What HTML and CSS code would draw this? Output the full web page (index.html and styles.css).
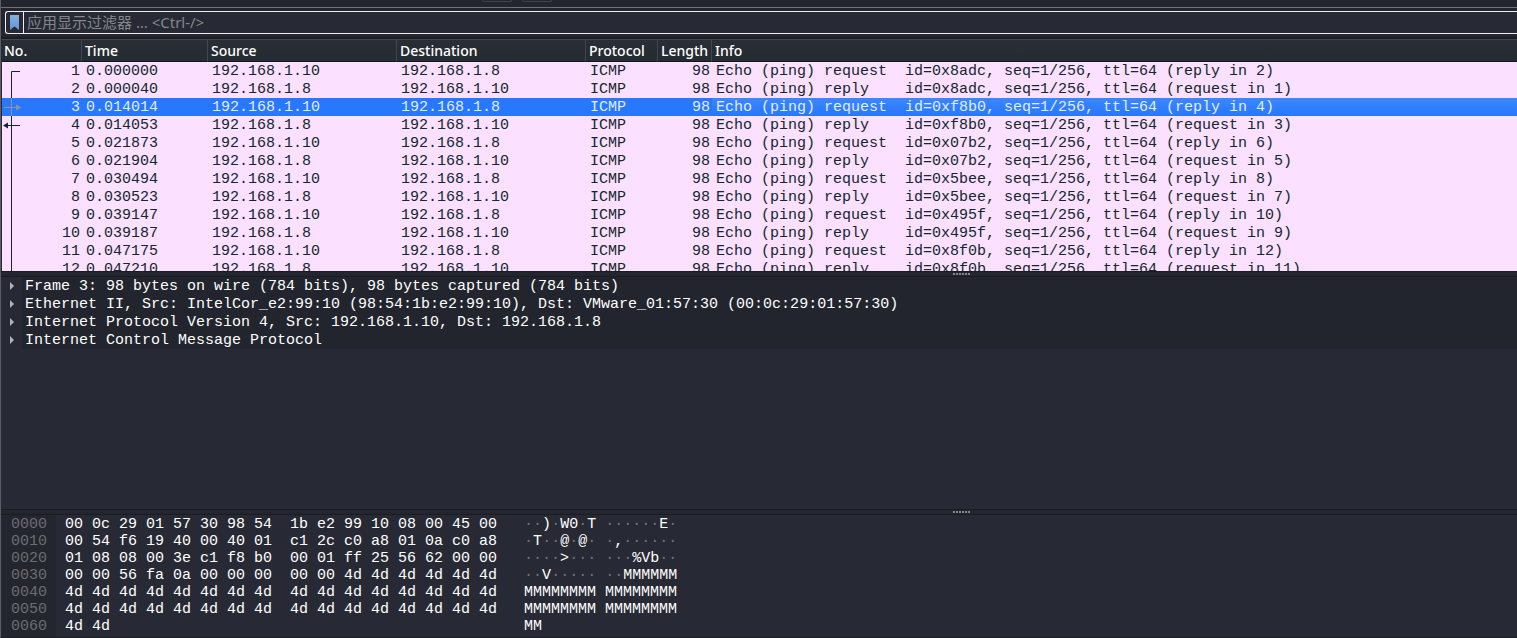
FILE: index.html
```html
<!DOCTYPE html>
<html lang="zh-CN">
<head>
<meta charset="utf-8">
<title>Packet capture</title>
<link rel="stylesheet" href="styles.css">
</head>
<body>
<main class="window">
  <div class="toolbar"><span class="tool-edge"></span><span class="tool-edge"></span></div>
  <form class="filter-bar">
    <div class="filter">
      <button class="bookmark" type="button" aria-label="书签">
        <svg width="9" height="15" viewBox="0 0 9 15"><defs><linearGradient id="bm" x1="0" y1="0" x2="0" y2="1"><stop offset="0" stop-color="#85b0e4"/><stop offset="1" stop-color="#6394d3"/></linearGradient></defs><path d="M0 0H9V15L4.500 11.500L0 15Z" fill="url(#bm)"/></svg>
      </button>
      <input class="filter-input" type="text" aria-label="显示过滤器" placeholder="应用显示过滤器 … &lt;Ctrl-/&gt;">
    </div>
  </form>
  <section class="packets">
    <table class="packet-table">
      <colgroup><col class="c-no"><col class="c-time"><col class="c-addr"><col class="c-addr"><col class="c-proto"><col class="c-len"><col></colgroup>
      <thead><tr><th>No.</th><th>Time</th><th>Source</th><th>Destination</th><th>Protocol</th><th>Length</th><th>Info</th></tr></thead>
      <tbody>
        <tr><td>1</td><td>0.000000</td><td>192.168.1.10</td><td>192.168.1.8</td><td>ICMP</td><td>98</td><td>Echo (ping) request  id=0x8adc, seq=1/256, ttl=64 (reply in 2)</td></tr>
        <tr><td>2</td><td>0.000040</td><td>192.168.1.8</td><td>192.168.1.10</td><td>ICMP</td><td>98</td><td>Echo (ping) reply    id=0x8adc, seq=1/256, ttl=64 (request in 1)</td></tr>
        <tr class="selected"><td>3</td><td>0.014014</td><td>192.168.1.10</td><td>192.168.1.8</td><td>ICMP</td><td>98</td><td>Echo (ping) request  id=0xf8b0, seq=1/256, ttl=64 (reply in 4)</td></tr>
        <tr><td>4</td><td>0.014053</td><td>192.168.1.8</td><td>192.168.1.10</td><td>ICMP</td><td>98</td><td>Echo (ping) reply    id=0xf8b0, seq=1/256, ttl=64 (request in 3)</td></tr>
        <tr><td>5</td><td>0.021873</td><td>192.168.1.10</td><td>192.168.1.8</td><td>ICMP</td><td>98</td><td>Echo (ping) request  id=0x07b2, seq=1/256, ttl=64 (reply in 6)</td></tr>
        <tr><td>6</td><td>0.021904</td><td>192.168.1.8</td><td>192.168.1.10</td><td>ICMP</td><td>98</td><td>Echo (ping) reply    id=0x07b2, seq=1/256, ttl=64 (request in 5)</td></tr>
        <tr><td>7</td><td>0.030494</td><td>192.168.1.10</td><td>192.168.1.8</td><td>ICMP</td><td>98</td><td>Echo (ping) request  id=0x5bee, seq=1/256, ttl=64 (reply in 8)</td></tr>
        <tr><td>8</td><td>0.030523</td><td>192.168.1.8</td><td>192.168.1.10</td><td>ICMP</td><td>98</td><td>Echo (ping) reply    id=0x5bee, seq=1/256, ttl=64 (request in 7)</td></tr>
        <tr><td>9</td><td>0.039147</td><td>192.168.1.10</td><td>192.168.1.8</td><td>ICMP</td><td>98</td><td>Echo (ping) request  id=0x495f, seq=1/256, ttl=64 (reply in 10)</td></tr>
        <tr><td>10</td><td>0.039187</td><td>192.168.1.8</td><td>192.168.1.10</td><td>ICMP</td><td>98</td><td>Echo (ping) reply    id=0x495f, seq=1/256, ttl=64 (request in 9)</td></tr>
        <tr><td>11</td><td>0.047175</td><td>192.168.1.10</td><td>192.168.1.8</td><td>ICMP</td><td>98</td><td>Echo (ping) request  id=0x8f0b, seq=1/256, ttl=64 (reply in 12)</td></tr>
        <tr><td>12</td><td>0.047210</td><td>192.168.1.8</td><td>192.168.1.10</td><td>ICMP</td><td>98</td><td>Echo (ping) reply    id=0x8f0b, seq=1/256, ttl=64 (request in 11)</td></tr>
      </tbody>
    </table>
    <svg class="relations" width="22" height="216" viewBox="0 0 22 216" aria-hidden="true">
      <path d="M18 9.500H9.500V36M9.500 54V216" fill="none" stroke="#12272e"/>
      <path d="M9.500 36V54M2 45.500H14" fill="none" stroke="#8c929e"/>
      <path d="M14 42.500L19.500 45.500L14 48.500Z" fill="#8c929e"/>
      <path d="M5 63.500H18" fill="none" stroke="#12272e"/>
      <path d="M1 63.500L6 60.500V66.500Z" fill="#12272e"/>
    </svg>
  </section>
  <div class="splitter"><span class="grip"><i></i><i></i><i></i><i></i><i></i><i></i></span></div>
  <section class="details">
    <ul class="tree">
      <li><button class="expander" aria-label="展开"></button><span class="node">Frame 3: 98 bytes on wire (784 bits), 98 bytes captured (784 bits)</span></li>
      <li><button class="expander" aria-label="展开"></button><span class="node">Ethernet II, Src: IntelCor_e2:99:10 (98:54:1b:e2:99:10), Dst: VMware_01:57:30 (00:0c:29:01:57:30)</span></li>
      <li><button class="expander" aria-label="展开"></button><span class="node">Internet Protocol Version 4, Src: 192.168.1.10, Dst: 192.168.1.8</span></li>
      <li><button class="expander" aria-label="展开"></button><span class="node">Internet Control Message Protocol</span></li>
    </ul>
  </section>
  <div class="splitter"><span class="grip"><i></i><i></i><i></i><i></i><i></i><i></i></span></div>
  <section class="bytes">
<pre class="offsets">0000
0010
0020
0030
0040
0050
0060</pre>
<pre class="hex">00 0c 29 01 57 30 98 54  1b e2 99 10 08 00 45 00
00 54 f6 19 40 00 40 01  c1 2c c0 a8 01 0a c0 a8
01 08 08 00 3e c1 f8 b0  00 01 ff 25 56 62 00 00
00 00 56 fa 0a 00 00 00  00 00 4d 4d 4d 4d 4d 4d
4d 4d 4d 4d 4d 4d 4d 4d  4d 4d 4d 4d 4d 4d 4d 4d
4d 4d 4d 4d 4d 4d 4d 4d  4d 4d 4d 4d 4d 4d 4d 4d
4d 4d</pre>
<pre class="ascii">··<b>)</b>·<b>W0</b>·<b>T</b> ······<b>E</b>·
·<b>T</b>··<b>@</b>·<b>@</b>· ·<b>,</b>······
····<b>&gt;</b>··· ···<b>%Vb</b>··
··<b>V</b>····· ··<b>MMMMMM</b>
<b>MMMMMMMM MMMMMMMM</b>
<b>MMMMMMMM MMMMMMMM</b>
<b>MM</b></pre>
  </section>
</main>
</body>
</html>
```
FILE: styles.css
```css
* { box-sizing: border-box; }

body {
  margin: 0;
  background: #272a34;
  color: #ffffff;
  font-family: "Liberation Mono", "Noto Sans CJK SC", monospace;
  font-size: 15px;
}

.window {
  display: flex;
  flex-direction: column;
  height: 100vh;
  overflow: hidden;
  border-left: 1px solid #5d5d61;
  border-bottom: 1px solid #1c1e25;
}

.toolbar {
  display: flex;
  flex: none;
  gap: 10px;
  height: 8px;
  padding-left: 481px;
  background: #23262e;
  border-bottom: 1px solid #707176;
}

.tool-edge {
  width: 30px;
  height: 2px;
  border: 1px solid #41444d;
  border-top: 0;
  border-radius: 0 0 3px 3px;
}

.filter-bar {
  flex: none;
  margin: 0;
  padding: 3px 0 3px 4px;
  background: #23262e;
  border-bottom: 2px solid #1b1d23;
}

.filter {
  display: flex;
  height: 23px;
  border: 1px solid #eeeeee;
  border-right: 0;
  border-radius: 3px 0 0 3px;
  background: #272a34;
}

.bookmark {
  display: flex;
  align-items: center;
  justify-content: center;
  width: 18px;
  padding: 0;
  border: 0;
  border-right: 1px solid #eeeeee;
  background: none;
}

.filter-input {
  flex: 1;
  min-width: 0;
  padding: 0 3px 2px;
  border: 0;
  outline: 0;
  background: none;
  color: #ffffff;
  font: 15px "Noto Sans", "Noto Sans CJK SC", sans-serif;
}

.filter-input::placeholder { color: #85868b; opacity: 1; }

.packets {
  position: relative;
  flex: 232 1 0;
  min-height: 0;
  margin-left: 1px;
  overflow: hidden;
}

.packet-table {
  width: 100%;
  table-layout: fixed;
  border-collapse: separate;
  border-spacing: 0;
}

.c-no { width: 80px; }
.c-time { width: 126px; }
.c-addr { width: 189px; }
.c-proto { width: 72px; }
.c-len { width: 54px; }

th {
  height: 23px;
  padding: 0 0 0 3px;
  border-top: 1px solid #43464d;
  border-right: 1px solid #43464d;
  border-bottom: 1px solid #15171b;
  background: linear-gradient(#2a2e36, #242b31);
  font: 500 14px/21px "Noto Sans", sans-serif;
  text-align: left;
  white-space: nowrap;
}

th:first-child { padding-left: 2px; }
th:last-child { border-right: 0; }

td {
  height: 18px;
  padding: 2px 2px 0 4px;
  overflow: hidden;
  background: #fbe0ff;
  color: #12272e;
  line-height: 16px;
  white-space: pre;
}

td:first-child,
td:nth-child(6) { text-align: right; }

.selected td {
  background: #2777ff;
  color: #e2ecff;
}

.selected td:last-child { background: linear-gradient(#3b87ff, #2777ff); }

.relations {
  position: absolute;
  top: 23px;
  left: 0;
}

.splitter {
  display: flex;
  flex: none;
  align-items: center;
  justify-content: center;
  height: 6px;
  padding-left: 404px;
  border-top: 1px solid #1a1c22;
  border-bottom: 1px solid #1a1c22;
  background: #23262e;
}

.grip { display: flex; gap: 1px; }
.grip i { width: 2px; height: 2px; background: #85868a; }

.details {
  flex: 232 1 0;
  min-height: 0;
  overflow: hidden;
}

.tree {
  margin: 0;
  padding: 0;
  list-style: none;
}

.tree li {
  display: flex;
  height: 18px;
  padding-left: 1px;
}

.expander {
  display: flex;
  align-items: center;
  width: 20px;
  padding: 0 0 0 8px;
  border: 0;
  background: none;
}

.expander::before {
  content: "";
  border: 4px solid transparent;
  border-right: 0;
  border-left-color: #b2b3b6;
}

.node {
  flex: 1;
  padding-top: 2px;
  padding-left: 3px;
  background: #22252d;
  line-height: 16px;
  white-space: pre;
}

.bytes {
  display: flex;
  flex: none;
  padding: 0 0 0 1px;
}

.bytes pre {
  margin: 0;
  padding-top: 1px;
  padding-bottom: 2px;
  font: 15px/17px "Liberation Mono", monospace;
}

.bytes .offsets {
  padding-right: 9px;
  padding-left: 9px;
  background: #23262e;
  color: #6c6d71;
}

.bytes .hex { padding-left: 9px; }

.bytes .ascii {
  padding-left: 27px;
  color: #707278;
}

.ascii b {
  color: #ffffff;
  font-weight: normal;
}
```
